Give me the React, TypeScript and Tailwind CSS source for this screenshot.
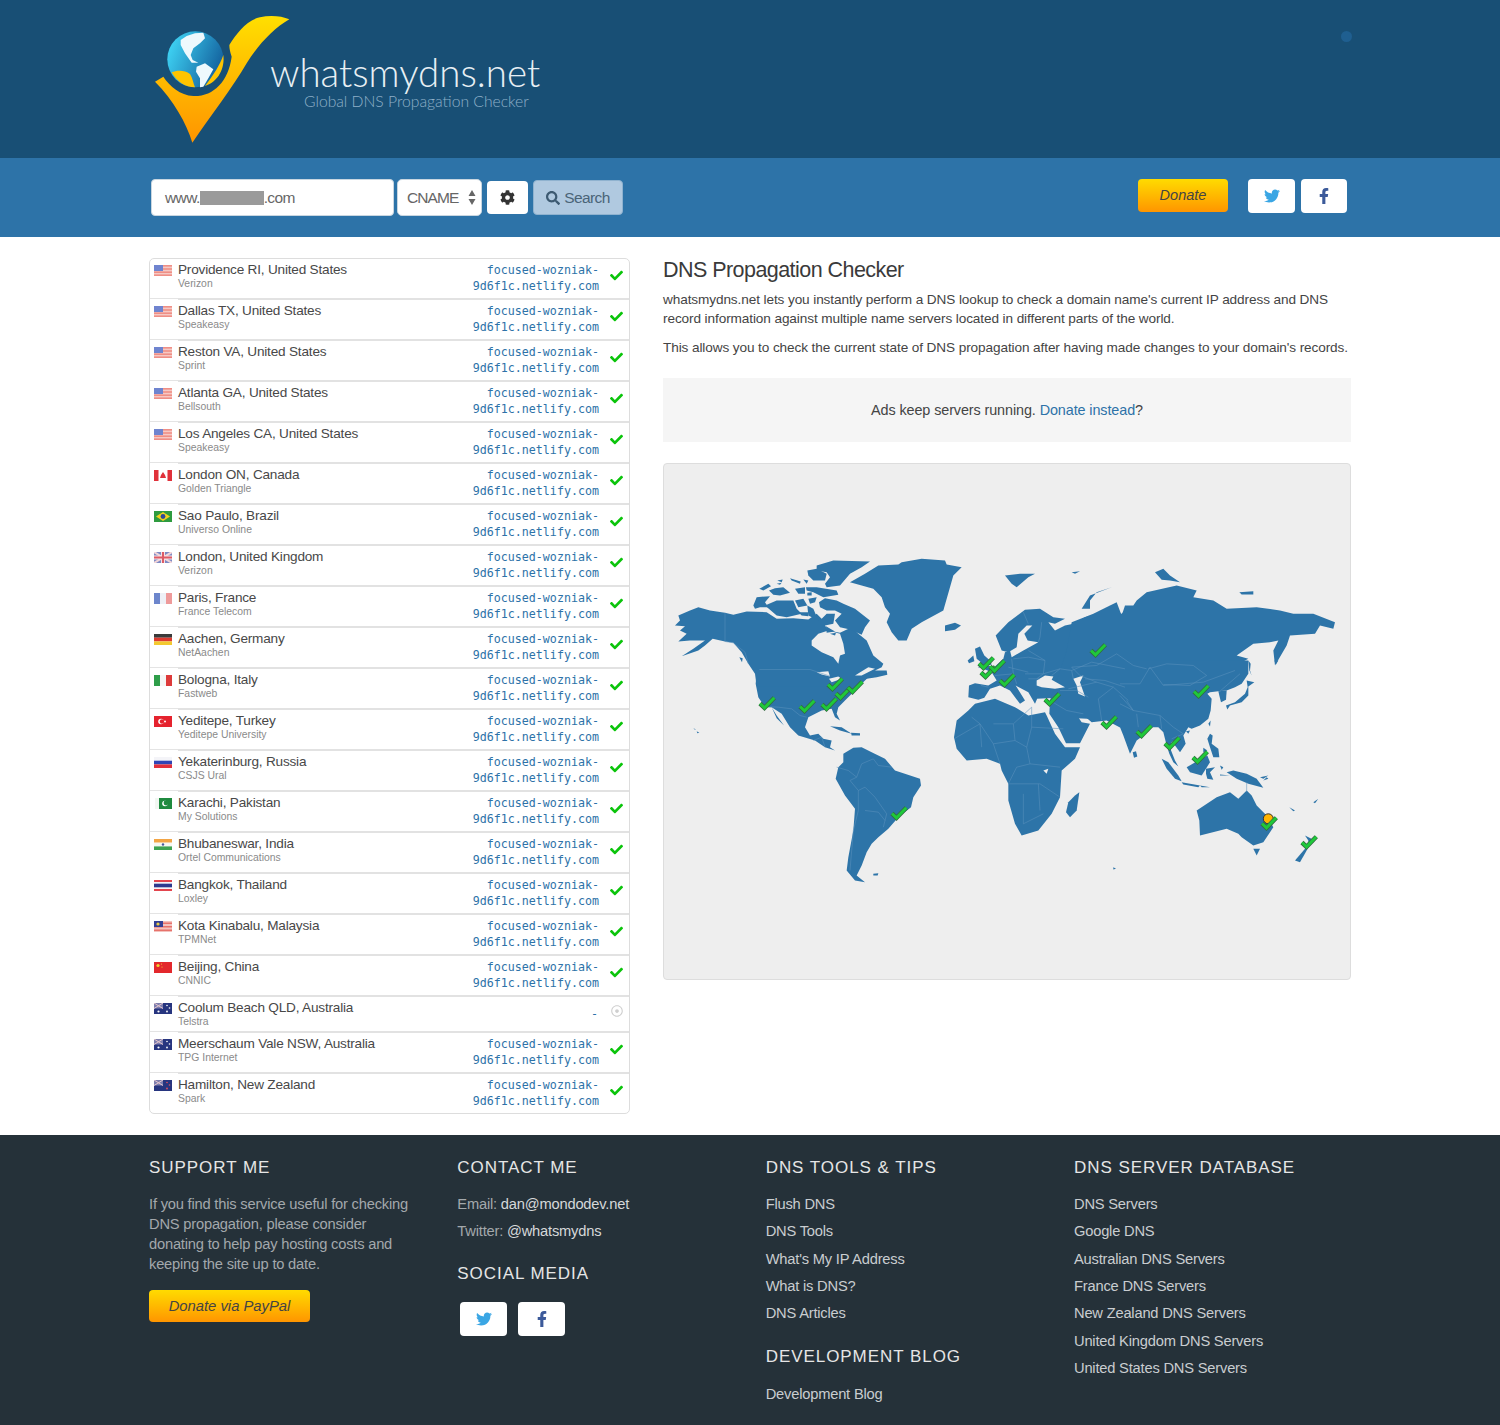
import React from "react";
import { FaCheck, FaCog, FaSearch, FaTwitter, FaFacebookF, FaRegDotCircle } from "react-icons/fa";

type R = { c: string; n: string; f: string; p?: boolean };
const rows: R[] = [
  { c: "Providence RI, United States", n: "Verizon", f: "us" },
  { c: "Dallas TX, United States", n: "Speakeasy", f: "us" },
  { c: "Reston VA, United States", n: "Sprint", f: "us" },
  { c: "Atlanta GA, United States", n: "Bellsouth", f: "us" },
  { c: "Los Angeles CA, United States", n: "Speakeasy", f: "us" },
  { c: "London ON, Canada", n: "Golden Triangle", f: "ca" },
  { c: "Sao Paulo, Brazil", n: "Universo Online", f: "br" },
  { c: "London, United Kingdom", n: "Verizon", f: "gb" },
  { c: "Paris, France", n: "France Telecom", f: "fr" },
  { c: "Aachen, Germany", n: "NetAachen", f: "de" },
  { c: "Bologna, Italy", n: "Fastweb", f: "it" },
  { c: "Yeditepe, Turkey", n: "Yeditepe University", f: "tr" },
  { c: "Yekaterinburg, Russia", n: "CSJS Ural", f: "ru" },
  { c: "Karachi, Pakistan", n: "My Solutions", f: "pk" },
  { c: "Bhubaneswar, India", n: "Ortel Communications", f: "in" },
  { c: "Bangkok, Thailand", n: "Loxley", f: "th" },
  { c: "Kota Kinabalu, Malaysia", n: "TPMNet", f: "my" },
  { c: "Beijing, China", n: "CNNIC", f: "cn" },
  { c: "Coolum Beach QLD, Australia", n: "Telstra", f: "au", p: true },
  { c: "Meerschaum Vale NSW, Australia", n: "TPG Internet", f: "au" },
  { c: "Hamilton, New Zealand", n: "Spark", f: "nz" },
];

function Flag({ f }: { f: string }) {
  const body: Record<string, React.ReactNode> = {
    us: (
      <>
        <rect width="18" height="11" fill="#f6c9c4" />
        <rect y="0" width="18" height="1.6" fill="#ef8f86" />
        <rect y="3.2" width="18" height="1.6" fill="#ef8f86" />
        <rect y="6.4" width="18" height="1.6" fill="#ef8f86" />
        <rect y="9.4" width="18" height="1.6" fill="#ef8f86" />
        <rect width="9" height="6" fill="#6f84cf" />
      </>
    ),
    ca: (
      <>
        <rect width="18" height="11" fill="#fff" />
        <rect width="4.5" height="11" fill="#e0313a" />
        <rect x="13.5" width="4.5" height="11" fill="#e0313a" />
        <path d="M9 2l2 3 1 3H6l1-3z" fill="#e0313a" />
      </>
    ),
    br: (
      <>
        <rect width="18" height="11" fill="#2e9b3f" />
        <path d="M9 1l7 4.5L9 10 2 5.5z" fill="#f2d21f" />
        <circle cx="9" cy="5.5" r="2.4" fill="#2c4a9a" />
      </>
    ),
    gb: (
      <>
        <rect width="18" height="11" fill="#7c8ac4" />
        <path d="M0 0l18 11M18 0L0 11" stroke="#f2d5d8" strokeWidth="2" />
        <rect x="7" width="4" height="11" fill="#f6e3e5" />
        <rect y="3.5" width="18" height="4" fill="#f6e3e5" />
        <rect x="8" width="2" height="11" fill="#dd5b66" />
        <rect y="4.5" width="18" height="2" fill="#dd5b66" />
      </>
    ),
    fr: (
      <>
        <rect width="6" height="11" fill="#6d86cc" />
        <rect x="6" width="6" height="11" fill="#eef0f6" />
        <rect x="12" width="6" height="11" fill="#ee9a9a" />
      </>
    ),
    de: (
      <>
        <rect width="18" height="3.7" fill="#3a3a3a" />
        <rect y="3.7" width="18" height="3.7" fill="#dd3a30" />
        <rect y="7.4" width="18" height="3.6" fill="#f3c92f" />
      </>
    ),
    it: (
      <>
        <rect width="6" height="11" fill="#2f9e4a" />
        <rect x="6" width="6" height="11" fill="#f5f5f5" />
        <rect x="12" width="6" height="11" fill="#dd3a3a" />
      </>
    ),
    tr: (
      <>
        <rect width="18" height="11" fill="#e5232e" />
        <circle cx="7" cy="5.5" r="2.8" fill="#fff" />
        <circle cx="8" cy="5.5" r="2.2" fill="#e5232e" />
        <circle cx="11" cy="5.5" r="1" fill="#fff" />
      </>
    ),
    ru: (
      <>
        <rect width="18" height="3.7" fill="#f4f4f8" />
        <rect y="3.7" width="18" height="3.7" fill="#2f45b5" />
        <rect y="7.4" width="18" height="3.6" fill="#e2303a" />
      </>
    ),
    pk: (
      <>
        <rect x="1" width="17" height="11" fill="#1f8a3f" />
        <rect x="1" width="4" height="11" fill="#f2f7f2" />
        <circle cx="11" cy="5.5" r="2.8" fill="#fff" />
        <circle cx="12" cy="5" r="2.4" fill="#1f8a3f" />
      </>
    ),
    in: (
      <>
        <rect width="18" height="3.7" fill="#f3a545" />
        <rect y="3.7" width="18" height="3.7" fill="#f7f7f2" />
        <rect y="7.4" width="18" height="3.6" fill="#3fa351" />
        <circle cx="9" cy="5.5" r="1.2" fill="#47599b" />
      </>
    ),
    th: (
      <>
        <rect width="18" height="11" fill="#e3454e" />
        <rect y="2" width="18" height="7" fill="#f4f4f8" />
        <rect y="3.7" width="18" height="3.6" fill="#2d3a8f" />
      </>
    ),
    my: (
      <>
        <rect width="18" height="11" fill="#f3c3bf" />
        <rect y="1.5" width="18" height="1.5" fill="#e7726b" />
        <rect y="5" width="18" height="1.5" fill="#e7726b" />
        <rect y="8.5" width="18" height="1.5" fill="#e7726b" />
        <rect width="9" height="6" fill="#333f95" />
        <circle cx="4" cy="3" r="1.6" fill="#e9cd47" />
      </>
    ),
    cn: (
      <>
        <rect width="18" height="11" fill="#e3282c" />
        <circle cx="4" cy="3.5" r="1.6" fill="#f2d32f" />
        <circle cx="7.5" cy="2" r="0.6" fill="#f2d32f" />
        <circle cx="8" cy="5" r="0.6" fill="#f2d32f" />
      </>
    ),
    au: (
      <>
        <rect width="18" height="11" fill="#27357f" />
        <rect width="9" height="5.5" fill="#7e7fae" />
        <path d="M0 0l9 5.5M9 0L0 5.5" stroke="#e5c5cd" strokeWidth="1" />
        <circle cx="13" cy="2.5" r="0.8" fill="#fff" />
        <circle cx="15.5" cy="5" r="0.8" fill="#fff" />
        <circle cx="13" cy="8.5" r="0.9" fill="#fff" />
        <circle cx="4.5" cy="8.5" r="1.1" fill="#fff" />
      </>
    ),
    nz: (
      <>
        <rect width="18" height="11" fill="#27357f" />
        <rect width="9" height="5.5" fill="#7e7fae" />
        <path d="M0 0l9 5.5M9 0L0 5.5" stroke="#e5c5cd" strokeWidth="1" />
        <circle cx="13" cy="2.5" r="0.8" fill="#e2505c" />
        <circle cx="15.5" cy="5" r="0.8" fill="#e2505c" />
        <circle cx="13" cy="8.5" r="0.9" fill="#e2505c" />
      </>
    ),
  };
  return (
    <svg width="18" height="11" viewBox="0 0 18 11" className="block">
      {body[f]}
    </svg>
  );
}

function Row({ r, first }: { r: R; first: boolean }) {
  return (
    <div className="flex">
      <div className={`w-[28px] shrink-0 pl-[4px] ${first ? "" : "border-t border-[#e4e4e4] pt-px"}`}>
        <div className="pt-[6px]">
          <Flag f={r.f} />
        </div>
      </div>
      <div className={`flex-1 min-w-0 flex ${first ? "" : "border-t-2 border-[#e2e2e2]"} ${r.p ? "h-[36px]" : first ? "h-[39px]" : "h-[41px]"}`}>
        <div className="flex-1 min-w-0 pt-[2px]">
          <div className="text-[13.6px] leading-[17px] text-[#484848] tracking-[-0.2px]">{r.c}</div>
          <div className="text-[10.4px] leading-[11px] text-[#8a8a8a]">{r.n}</div>
        </div>
        <div className="w-[160px] pt-[3px] text-right font-['DejaVu_Sans_Mono',monospace] text-[11.67px] leading-[16px] text-[#2d72a8]">
          {r.p ? (
            <div className="pt-[6px] pr-[1px]">-</div>
          ) : (
            <>
              <div>focused-wozniak-</div>
              <div>9d6f1c.netlify.com</div>
            </>
          )}
        </div>
        <div className="w-[30px] shrink-0 flex justify-center pl-[5px]">
          {r.p ? (
            <FaRegDotCircle className="mt-[8px] text-[12px] text-[#cfcfcf]" />
          ) : (
            <FaCheck className="mt-[10px] text-[13px] text-[#0bc40b]" />
          )}
        </div>
      </div>
    </div>
  );
}

type Layer = { t: string; land: string[]; water: string[]; extra: string[]; lines: string[] };

const layers: Layer[] = [
  {
    t: "translate(665 550) scale(0.33333)",
    land: [
      "275,365 300,350 590,350 610,380 590,400 570,420 540,450 520,470 515,490 525,510 510,500 500,475 470,480 430,500 420,530 435,555 460,550 475,565 500,570 495,590 525,610 510,600 480,590 450,570 400,555 375,530 350,490 320,470 300,470 280,440 272,400",
      "555,95 600,70 640,45 700,42 710,35 770,25 840,30 845,42 890,50 865,75 855,110 835,180 770,215 740,235 725,270 700,270 680,245 665,215 675,190 660,170 650,140 625,115 590,105",
      "495,527 530,530 560,550 525,540",
      "558,547 585,548 585,555 560,555",
      "85,533 92,536 90,538",
      "95,542 103,547 97,548",
      "320,470 335,495 357,525 335,503",
      "535,610 565,592 590,590 620,605 660,625 690,660 765,685 768,705 745,740 738,770 700,800 670,835 640,860 620,880 605,905 590,945 575,975 600,995 570,990 545,960 550,920 565,840 570,775 540,735 512,685 520,650 535,635",
      "625,970 640,968 638,975 625,975",
    ],
    water: [
      "455,365 490,362 495,378 470,372",
      "492,385 520,378 530,385 500,395",
      "570,375 610,350 630,355 590,375",
    ],
    extra: [],
    lines: [
      "290,468 340,470 380,475 405,495 425,500",
      "445,570 470,560 480,590",
      "575,680 555,690 580,720 580,780 565,840 555,960",
      "575,680 590,640 625,625 640,645 680,650",
      "515,650 550,660 575,680",
      "580,720 600,710 630,740 665,790 655,830",
      "600,780 640,785 660,810",
    ],
  },
  {
    t: "translate(670 555) scale(0.33333)",
    land: [
      "15,210 30,195 25,180 60,165 85,155 120,165 165,172 190,178 230,168 290,170 320,190 370,188 415,192 440,175 455,190 470,175 495,175 490,205 465,210 475,225 510,232 545,215 565,235 590,255 610,300 640,325 635,335 615,345 650,345 652,358 620,365 590,370 560,385 560,392 260,392 255,355 235,325 215,290 190,262 165,258 128,250 105,270 85,285 35,302 70,280 105,255 60,255 25,258 50,235 30,225 45,212",
      "447,140 465,128 500,135 520,145 555,160 600,195 585,215 575,238 540,222 510,215 495,195 515,175 495,165 470,165 450,155",
      "250,150 260,125 300,122 285,140 295,155 270,155 255,160",
      "285,150 320,135 370,135 380,160 395,175 350,185 320,180",
      "268,100 295,85 303,92 280,105",
      "297,105 315,98 340,95 360,112 330,120 310,118",
      "375,100 405,95 405,115 385,115",
      "408,95 440,95 500,105 505,118 460,125 430,110 410,105",
      "412,112 425,110 425,120 412,120",
      "375,135 400,130 412,150 385,155",
      "415,130 440,125 435,140 420,145",
      "412,150 430,160 445,195 415,180",
      "360,68 392,78 390,85 365,75",
      "322,75 338,72 335,80",
      "320,85 335,82 330,88",
      "400,72 415,75 410,85",
      "412,45 440,40 470,55 465,75 430,75 415,60",
      "440,30 490,15 600,18 575,35 540,55 510,90 470,95 465,85 480,65 470,50 440,45",
      "385,170 415,170 415,182 395,180",
      "208,305 218,308 216,320",
    ],
    water: [
      "425,255 445,235 475,225 510,235 520,265 525,295 510,300 505,325 490,305 455,290 425,270",
    ],
    extra: ["468,212 495,228 470,232", "480,235 498,232 495,240"],
    lines: [
      "165,172 165,258 190,262 225,290 235,325",
      "268,342 420,342 480,362",
    ],
  },
  {
    t: "translate(945 590) scale(0.33333)",
    land: [
      "72,285 90,278 130,285 155,270 140,245 108,232 125,225 150,228 175,205 180,185 195,180 200,200 235,180 280,155 248,150 238,130 262,105 245,105 220,130 215,170 190,185 170,180 152,135 190,95 240,58 285,55 325,80 360,85 330,100 310,95 330,120 360,105 385,100 420,80 490,60 530,70 540,60 540,390 330,380 325,345 340,322 275,325 270,300 288,298 270,340 250,305 212,285 240,330 225,340 195,300 165,285 135,295 118,322 100,328 70,320",
      "90,175 105,168 118,195 135,210 140,222 100,232 108,215 95,205",
      "68,210 85,195 88,212 72,218",
      "0,105 30,97 48,105 30,118 0,122",
    ],
    water: [
      "275,270 300,255 325,258 320,268 360,290 330,295 290,290 275,285",
      "385,265 415,255 405,275 420,318 400,310 395,285",
    ],
    extra: [],
    lines: [
      "200,205 205,250 150,255",
      "205,205 250,200 300,210 295,250 345,235 380,240",
      "250,180 300,210",
      "240,250 295,250 275,265",
      "190,230 250,245",
      "205,250 215,280",
      "250,265 285,265",
      "290,95 285,140 280,155",
      "235,65 250,100",
      "320,255 345,235",
      "380,240 440,215 490,225 540,235",
      "380,240 385,265",
      "420,265 480,270 540,290",
      "345,300 395,300 430,320",
      "108,285 130,290",
    ],
  },
  {
    t: "translate(1000 550) scale(0.33333)",
    land: [
      "-138,560 -130,510 -95,480 -75,460 -15,445 45,470 85,495 135,485 140,495 165,550 195,590 240,590 225,625 185,660 180,740 155,790 115,840 65,855 45,820 25,750 25,700 5,660 0,640 -40,625 -100,630 -130,595",
      "225,735 238,725 230,780 210,800 198,785 205,755",
      "148,490 150,450 200,300 215,215 280,190 330,165 350,155 365,195 375,165 400,165 410,150 440,125 530,105 590,120 580,140 640,150 680,175 770,170 840,180 880,190 940,190 1005,215 1000,235 960,225 945,250 870,255 860,285 825,345 820,300 835,270 810,275 760,280 710,315 745,325 360,531 320,510 275,515 245,490 225,485 245,515 270,520 240,578 198,578 175,530",
      "245,175 270,135 335,110 290,125 270,150 270,175",
      "15,75 60,70 105,70 85,80 50,110 35,100",
      "215,65 240,62 225,70",
      "465,65 490,55 510,75 540,95 510,90 485,88",
      "718,125 760,122 760,132 725,132",
      "590,780 650,740 690,725 715,745 740,720 755,735 770,765 800,795 820,830 790,875 760,885 725,860 715,850 680,835 600,855 598,810",
      "760,895 780,895 770,915",
      "885,930 915,895 930,880 920,900 900,935",
      "915,855 945,870 925,890 925,870",
      "868,770 885,780 880,782",
      "340,950 348,955 340,957",
      "940,755 955,745 945,758",
      "800,680 805,685 790,690",
    ],
    water: ["130,660 145,655 140,670"],
    extra: [],
    lines: [
      "-138,565 -60,520 -20,580 0,640",
      "-85,500 -60,520 -55,590",
      "-20,520 40,520 95,470",
      "40,520 45,570 -20,580",
      "95,470 95,530 190,535",
      "95,530 80,590 90,640 180,650",
      "45,570 80,590",
      "90,640 50,650 25,700",
      "25,700 120,700 180,740",
      "70,730 70,820 130,790",
      "115,700 120,780",
      "215,350 290,345 350,310 400,345 440,355",
      "215,350 240,375 290,395 340,410 385,450",
      "295,445 340,410",
      "305,510 295,445",
      "205,415 290,395",
      "150,450 200,480 250,490",
      "740,695 740,725",
    ],
  },
  {
    t: "translate(1120 660) scale(0.33333)",
    land: [
      "0,0 385,0 385,40 365,70 345,80 320,90 295,92 270,95 262,100 275,115 272,150 265,175 240,195 215,205 205,200 190,225 197,250 180,275 165,255 165,240 155,245 150,262 165,300 175,318 160,305 148,280 140,255 130,215 115,200 95,200 70,225 50,240 30,280 10,225 0,200",
      "295,92 320,90 318,118 303,125 298,105",
      "318,135 345,125 375,100 383,80 380,60 403,65 385,78 385,105 365,125 330,135 322,147",
      "385,0 392,10 390,30 395,45 388,30",
      "463,0 475,0 468,12",
      "265,190 272,180 270,198",
      "198,212 210,210 205,220",
      "38,275 48,272 52,288 42,292",
      "262,235 270,220 278,225 275,250 295,265 298,290 280,290 270,260",
      "250,262 262,270 250,275",
      "200,320 235,300 262,285 270,305 245,345 210,335",
      "125,295 145,305 175,345 185,362 165,355 140,325",
      "185,365 240,375 235,380 190,372",
      "258,325 285,320 270,335 280,358 262,355 258,340",
      "320,335 340,330 380,340 410,355 430,382 385,370 350,355",
      "300,315 310,320 305,328",
      "300,342 330,345 300,345",
      "240,375 270,380 245,380",
      "420,350 445,345 430,355",
    ],
    water: [],
    extra: [],
    lines: [
      "0,70 60,70 90,20 130,75 250,65 345,30",
      "85,25 140,10 220,15 260,45 210,75 130,72",
      "0,105 40,150 120,165 160,200 190,220 155,235",
      "40,150 20,120",
      "50,160 55,200",
      "120,165 125,205",
      "0,130 40,150",
      "300,92 360,40",
    ],
  },
];

const marks: [number, number][] = [
  [767, 703], [807, 706], [829, 704], [835, 684], [843, 693], [855, 687], [899, 813],
  [986, 663], [988, 672], [997, 666], [1007, 680],
  [1098, 650], [1052, 699], [1201, 691], [1109, 722], [1144, 731], [1172, 743], [1200, 757], [1269, 823], [1309, 842],
];

function Mark({ x, y }: { x: number; y: number }) {
  const pts = `${x - 7},${y} ${x - 2.5},${y + 4.3} ${x + 7.3},${y - 5.7}`;
  return (
    <>
      <polyline points={pts} fill="none" stroke="#33693f" strokeWidth="4.5" />
      <polyline points={pts} fill="none" stroke="#1fc83a" strokeWidth="3" />
    </>
  );
}

function WorldMap() {
  return (
    <svg viewBox="664 464 686 514" className="block w-full h-full">
      <g fill="#2d74a8">
        {layers.map((l, i) => (
          <g key={i} transform={l.t}>
            {l.land.map((p, j) => <polygon key={j} points={p} />)}
          </g>
        ))}
      </g>
      <g fill="#eeeeee">
        {layers.map((l, i) => (
          <g key={i} transform={l.t}>
            {l.water.map((p, j) => <polygon key={j} points={p} />)}
          </g>
        ))}
      </g>
      <g fill="#2d74a8">
        {layers.map((l, i) => (
          <g key={i} transform={l.t}>
            {l.extra.map((p, j) => <polygon key={j} points={p} />)}
          </g>
        ))}
      </g>
      <g fill="none" stroke="#5a92bd" strokeWidth="1.6">
        {layers.map((l, i) => (
          <g key={i} transform={l.t}>
            {l.lines.map((p, j) => <polyline key={j} points={p} />)}
          </g>
        ))}
      </g>
      <circle cx="1268.3" cy="818.3" r="5" fill="#ffb400" stroke="#333" strokeWidth="1" />
      {marks.map(([x, y], i) => <Mark key={i} x={x} y={y} />)}
    </svg>
  );
}

function Logo() {
  return (
    <svg width="150" height="140" viewBox="0 0 450 420" className="block">
      <defs>
        <linearGradient id="lg" x1="0" y1="0" x2="0" y2="1">
          <stop offset="0" stopColor="#ffdf00" />
          <stop offset="1" stopColor="#ff9400" />
        </linearGradient>
        <linearGradient id="gl" x1="0" y1="0.1" x2="1" y2="0.5">
          <stop offset="0" stopColor="#42dcfb" />
          <stop offset="1" stopColor="#14639f" />
        </linearGradient>
      </defs>
      <path
        d="M15 215 L40 200 C60 230 90 255 130 258 C190 260 235 215 245 140 C240 125 238 115 238 105 C260 70 290 30 330 22 C360 15 395 18 418 28 C370 55 320 110 290 160 C250 230 180 320 127 398 C110 340 70 270 15 215Z"
        fill="url(#lg)"
      />
      <circle cx="136" cy="148" r="84" fill="url(#gl)" />
      <polygon points="92,90 110,78 135,70 160,68 165,85 150,100 130,115 122,135 128,150 145,158 125,158 105,130 92,105" fill="#eef9fd" />
      <polygon points="140,170 165,160 190,178 175,205 160,230 150,232 150,205 138,185" fill="#eef9fd" />
      <path d="M65 187 C80 180 105 180 120 192 C128 205 130 220 135 232 C105 232 80 215 65 187Z" fill="#ffc400" />
      <path d="M165 228 C190 195 210 165 220 135 C225 175 205 215 165 228Z" fill="#ffc400" />
    </svg>
  );
}

const btn = "flex items-center justify-center bg-white rounded-[4px] h-[34px]";
const heading = "text-[17px] leading-[24px] tracking-[0.95px] text-[#e6e6e6] uppercase";
const link = "text-[14.7px] leading-[27.33px] tracking-[-0.2px]";

export default function App() {
  return (
    <div className="w-[1500px] font-['Liberation_Sans',Arial,sans-serif] bg-white">
      <header className="relative h-[158px] bg-[#184f75]">
        <div className="absolute left-[1341px] top-[31px] w-[11px] h-[11px] rounded-full bg-[#1f5f90]" />
        <div className="ml-[150px] flex pt-[10px]">
          <div className="w-[150px] shrink-0"><Logo /></div>
          <div className="-ml-[30px] pt-[38px]">
            <div className="font-['Lato',sans-serif] font-light text-[38.5px] leading-[48px] text-[#e8eff4]">whatsmydns.net</div>
            <div className="font-['Lato',sans-serif] font-light text-[15.7px] leading-[18px] text-[#8fb0c8] pl-[34px] -mt-[4px]">Global DNS Propagation Checker</div>
          </div>
        </div>
      </header>

      <nav className="h-[79px] bg-[#2d73a8] pl-[151px] pr-[153px] flex items-start justify-between pt-[21px]">
        <div className="flex">
          <div className="w-[243px] h-[37px] bg-white rounded-[4px] border border-[#c9d6e0] flex items-center pl-[13px] text-[15.5px] text-[#666] tracking-[-0.6px]">
            www.<span className="inline-block w-[64px] h-[14px] bg-[#9a9a9a]" />.com
          </div>
          <div className="ml-[3px] w-[85px] h-[37px] bg-white rounded-[5px] border border-[#c9d6e0] flex items-center pl-[9px] text-[15.5px] text-[#666] tracking-[-0.9px] relative">
            CNAME
            <svg width="8" height="15" viewBox="0 0 8 15" className="absolute right-[5px] top-[10px]">
              <path d="M4 0l3.5 6h-7zM4 15L.5 9h7z" fill="#666" />
            </svg>
          </div>
          <div className="ml-[5px] mt-[2px] w-[41px] h-[33px] bg-white rounded-[4px] flex items-center justify-center">
            <FaCog className="text-[15px] text-[#333]" />
          </div>
          <div className="ml-[5px] mt-[1px] w-[90px] h-[35px] bg-[#b0c9e0] border border-[#8fb2cf] rounded-[4px] flex items-center justify-center gap-[4px] text-[15.5px] text-[#4a6478] tracking-[-0.6px]">
            <FaSearch className="text-[14px] text-[#3d5a72]" />Search
          </div>
        </div>
        <div className="flex">
          <div className="w-[90px] h-[33px] rounded-[4px] bg-gradient-to-b from-[#ffdb00] to-[#ff9500] flex items-center justify-center italic text-[14.5px] text-[#444]">Donate</div>
          <div className="ml-[20px] flex gap-[6px]">
            <div className={`${btn} w-[47px]`}><FaTwitter className="text-[16px] text-[#3aa6e4]" /></div>
            <div className={`${btn} w-[46px]`}><FaFacebookF className="text-[16px] text-[#3c5a9a]" /></div>
          </div>
        </div>
      </nav>

      <main className="flex pl-[149px] pt-[21px] pb-[21px]">
        <div className="w-[481px] h-[856px] shrink-0 border border-[#ddd] rounded-[5px] overflow-hidden">
          {rows.map((r, i) => <Row key={i} r={r} first={i === 0} />)}
        </div>
        <div className="ml-[33px] w-[688px] text-[#444]">
          <h2 className="text-[21.5px] leading-[24px] tracking-[-0.55px] text-[#3a3a3a]">DNS Propagation Checker</h2>
          <p className="mt-[8px] text-[13.6px] leading-[19px] tracking-[-0.1px]">
            whatsmydns.net lets you instantly perform a DNS lookup to check a domain name's current IP address and DNS record information against multiple name servers located in different parts of the world.
          </p>
          <p className="mt-[10px] text-[13.6px] leading-[19px] tracking-[-0.1px] whitespace-nowrap">
            This allows you to check the current state of DNS propagation after having made changes to your domain's records.
          </p>
          <div className="mt-[21px] h-[64px] pt-[1px] bg-[#f5f5f5] flex items-center justify-center text-[14.4px] tracking-[-0.1px]">
            <span>Ads keep servers running. <span className="text-[#2d72a8]">Donate instead</span>?</span>
          </div>
          <div className="mt-[21px] h-[517px] bg-[#eeeeee] border border-[#ddd] rounded-[4px] overflow-hidden">
            <WorldMap />
          </div>
        </div>
      </main>

      <footer className="h-[290px] bg-[#253139] pl-[149px] grid grid-cols-[308.33px_308.33px_308.33px_308.33px] pt-[21px]">
        <div>
          <div className={heading}>Support me</div>
          <p className="mt-[14px] w-[268px] text-[14.7px] leading-[20px] text-[#a3a8ac] tracking-[-0.2px]">
            If you find this service useful for checking DNS propagation, please consider donating to help pay hosting costs and keeping the site up to date.
          </p>
          <div className="mt-[16px] w-[161px] h-[32px] rounded-[4px] bg-gradient-to-b from-[#ffdb00] to-[#ff9500] flex items-center justify-center italic text-[14.8px] text-[#444]">Donate via PayPal</div>
        </div>
        <div>
          <div className={heading}>Contact me</div>
          <div className="mt-[11px]">
            <div className={`${link} text-[#a3a8ac]`}>Email: <span className="text-[#d5d8da]">dan@mondodev.net</span></div>
            <div className={`${link} text-[#a3a8ac]`}>Twitter: <span className="text-[#d5d8da]">@whatsmydns</span></div>
          </div>
          <div className={`${heading} mt-[16px]`}>Social media</div>
          <div className="mt-[16px] ml-[3px] flex gap-[11px]">
            <div className={`${btn} w-[47px]`}><FaTwitter className="text-[16px] text-[#3aa6e4]" /></div>
            <div className={`${btn} w-[47px]`}><FaFacebookF className="text-[16px] text-[#3c5a9a]" /></div>
          </div>
        </div>
        <div>
          <div className={heading}>DNS Tools &amp; Tips</div>
          <div className="mt-[11px]">
            {["Flush DNS", "DNS Tools", "What's My IP Address", "What is DNS?", "DNS Articles"].map((t) => (
              <div key={t} className={`${link} text-[#c9cdd0]`}>{t}</div>
            ))}
          </div>
          <div className={`${heading} mt-[17px]`}>Development Blog</div>
          <div className={`${link} text-[#c9cdd0] mt-[12px]`}>Development Blog</div>
        </div>
        <div>
          <div className={heading}>DNS Server Database</div>
          <div className="mt-[11px]">
            {["DNS Servers", "Google DNS", "Australian DNS Servers", "France DNS Servers", "New Zealand DNS Servers", "United Kingdom DNS Servers", "United States DNS Servers"].map((t) => (
              <div key={t} className={`${link} text-[#c9cdd0]`}>{t}</div>
            ))}
          </div>
        </div>
      </footer>
    </div>
  );
}
